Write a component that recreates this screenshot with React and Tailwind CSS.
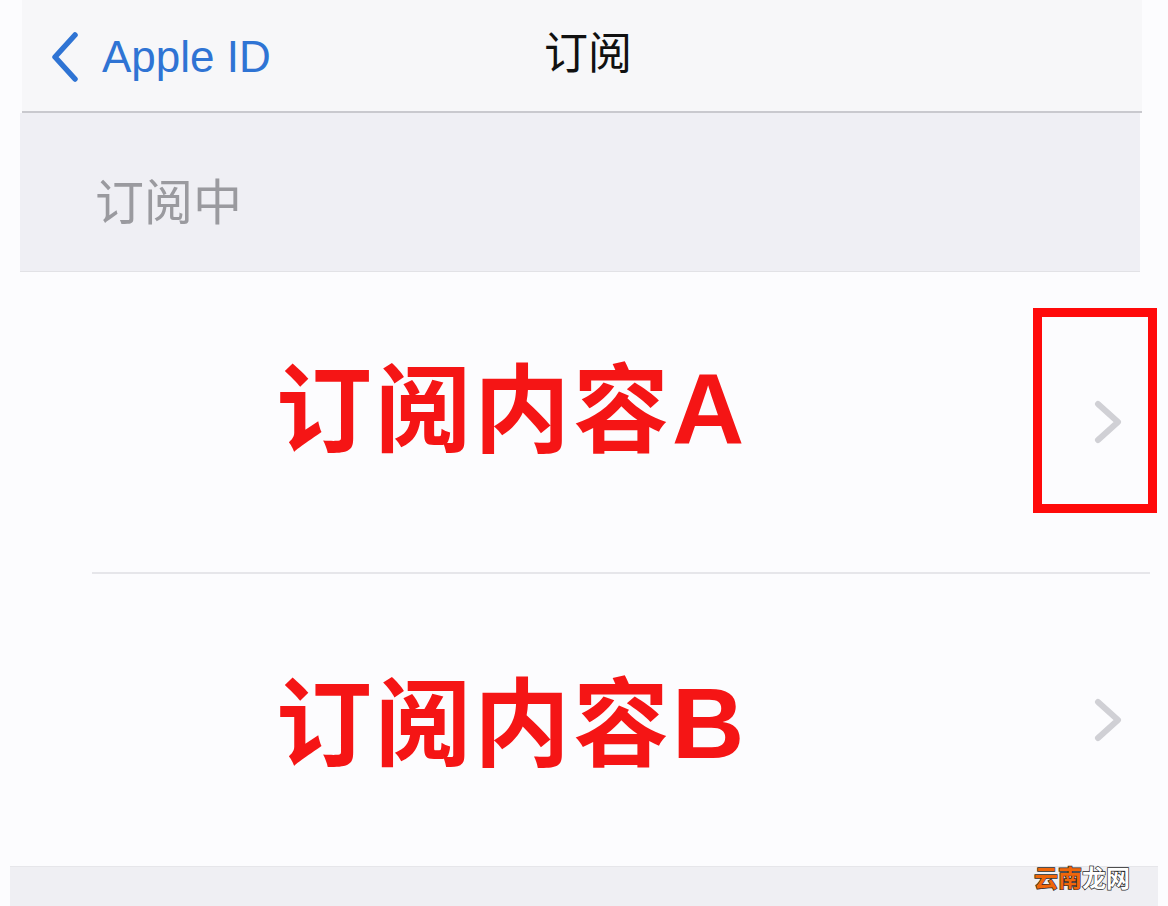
import React from "react";

const cjk = "font-['Noto_Sans_CJK_SC','Noto_Sans',sans-serif]";

function Chevron({ className }) {
  return (
    <svg viewBox="0 0 32 44" className={className} fill="none">
      <path
        d="M6 4 L26 22 L6 40"
        stroke="currentColor"
        strokeWidth="6"
        strokeLinecap="round"
        strokeLinejoin="round"
      />
    </svg>
  );
}

function BackChevron() {
  return (
    <svg viewBox="0 0 30 50" className="w-[30px] h-[50px] text-[#2f74d4]" fill="none">
      <path
        d="M25 3 L5 25 L25 47"
        stroke="currentColor"
        strokeWidth="5.5"
        strokeLinecap="round"
        strokeLinejoin="round"
      />
    </svg>
  );
}

function Row({ label, letter, textClass, children }) {
  return (
    <div className="relative flex items-center h-full pl-[276px] pr-[44px]">
      <span
        className={`text-[96px] leading-none font-bold text-[#f51515] tracking-[3px] ${textClass}`}
      >
        <span className={cjk}>{label}</span>
        <span className="font-['Liberation_Sans',sans-serif] text-[100px]">{letter}</span>
      </span>
      <Chevron className="ml-auto w-[32px] h-[44px] text-[#d0d0d5]" />
      {children}
    </div>
  );
}

export default function App() {
  return (
    <div className="w-[1168px] h-[906px] bg-[#fcfcfe] overflow-hidden relative flex flex-col">
      {/* nav bar */}
      <div className="h-[113px] pl-[22px] pr-[26px] shrink-0">
        <div className="h-full bg-[#f7f7f9] border-b-2 border-[#c9c9ce] flex items-center relative">
          <div className="flex items-center pl-[28px] pt-[2px] gap-[22px]">
            <BackChevron />
            <span className="font-['Liberation_Sans',sans-serif] text-[44px] text-[#2f74d4] leading-none">
              Apple ID
            </span>
          </div>
          <span
            className={`${cjk} absolute left-[522px] top-[22px] text-[44px] leading-none text-[#111] pt-[6px]`}
          >
            订阅
          </span>
        </div>
      </div>

      {/* section header */}
      <div className="h-[159px] shrink-0 pl-[20px] pr-[28px]">
        <div className="h-full bg-[#efeff4] border-b border-[#e2e2e6] flex items-end pb-[48px] pl-[75px]">
          <span className={`${cjk} text-[49px] leading-none text-[#9a9a9f]`}>
            订阅中
          </span>
        </div>
      </div>

      {/* row A */}
      <div className="h-[300px] shrink-0">
        <Row label="订阅内容" letter="A" textClass="mb-[30px]">
          <div className="absolute left-[1033px] top-[36px] w-[124px] h-[205px] border-[9px] border-[#ff0a0a]" />
        </Row>
      </div>

      <div className="h-[2px] ml-[92px] mr-[18px] bg-[#e6e6ea] shrink-0" />

      {/* row B */}
      <div className="h-[292px] shrink-0">
        <Row label="订阅内容" letter="B" textClass="mt-[2px]" />
      </div>

      {/* bottom band */}
      <div className="flex-1 mx-[10px] bg-[#efeff3] border-t border-[#e6e6ea] flex justify-end pr-[28px]">
        <span
          className={`${cjk} text-[24px] leading-none font-bold -mt-[2px] [-webkit-text-stroke:1.4px_#2a2a2a] [paint-order:stroke_fill]`}
        >
          <span className="text-[#f0660a]">云南</span>
          <span className="text-white">龙网</span>
        </span>
      </div>
    </div>
  );
}
